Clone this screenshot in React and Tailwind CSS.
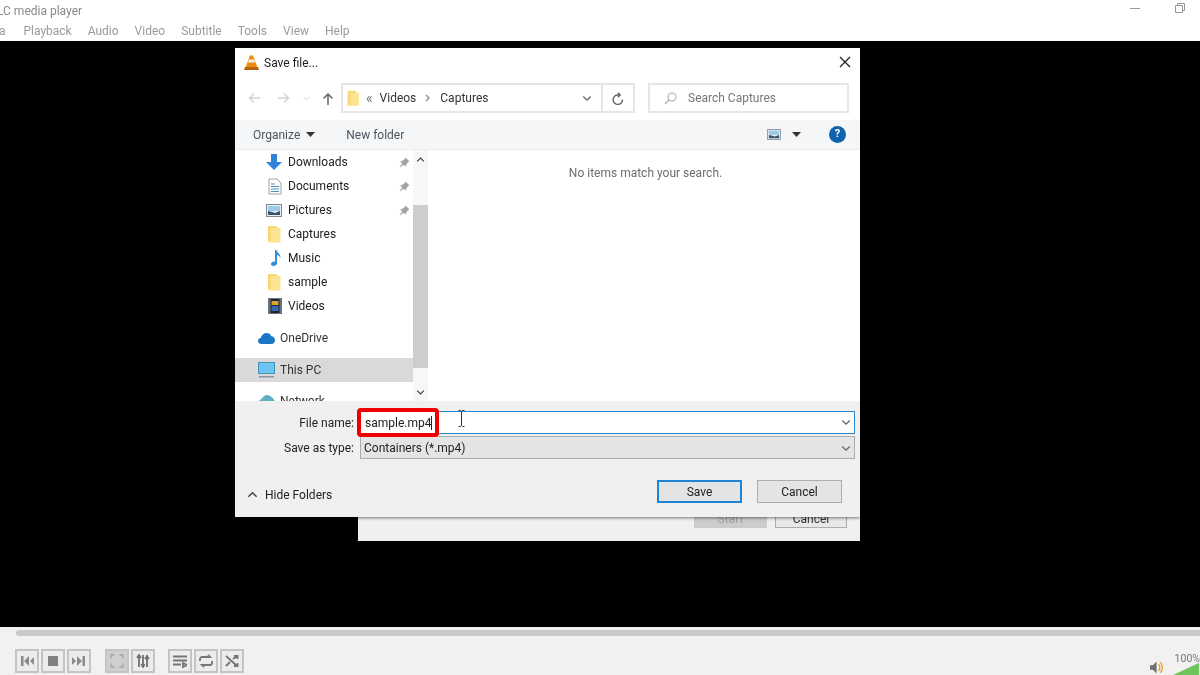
import React from "react";

const Folder = () => (
  <svg width="16" height="18" viewBox="0 0 16 18">
    <path d="M2 1h8l2 2v14H2z" fill="#f8d775" />
    <path d="M5 3h9.500v14.500H2V17L5 15z" fill="#fde58f" />
  </svg>
);

const Downloads = () => (
  <svg width="16" height="18" viewBox="0 0 16 18">
    <path d="M5 1h6v8h5l-8 8-8-8h5z" fill="#2f83d6" />
  </svg>
);

const Documents = () => (
  <svg width="14" height="17" viewBox="0 0 14 17">
    <path d="M1 1h8l4 4v11H1z" fill="#fdfdfd" stroke="#9aa3ab" />
    <path d="M3 6h4M3 8.500h8M3 11h8M3 13.500h8" stroke="#4a90b8" />
  </svg>
);

const Pictures = ({ w = 16, h = 13 }) => (
  <svg width={w} height={h} viewBox="0 0 16 13">
    <rect x="0.500" y="0.500" width="15" height="12" fill="#e8eef3" stroke="#7d8a94" />
    <rect x="2" y="2" width="12" height="5" fill="#9ccbe8" />
    <path d="M2 11V7l4 1 3 1 5-2v4z" fill="#39566b" />
  </svg>
);

const Music = () => (
  <svg width="12" height="18" viewBox="0 0 12 18">
    <path d="M5 1h1.500c.5 3 4.500 4 4 8-.8-2-2.500-3-3.500-3v8.500C7 16 5 17 3.300 17 1.800 17 1 16 1 15c0-1.500 2-2.800 4-2.400z" fill="#2f8fd8" />
  </svg>
);

const Videos = () => (
  <svg width="14" height="16" viewBox="0 0 14 16">
    <rect width="14" height="16" fill="#6c7279" />
    <rect x="2.500" y="1" width="9" height="14" fill="#1c2733" />
    <rect x="3.500" y="3" width="7" height="4" fill="#d8a531" />
    <rect x="3.500" y="8" width="7" height="5" fill="#3568b5" />
  </svg>
);

const OneDrive = () => (
  <svg width="17" height="11" viewBox="0 0 17 11">
    <path d="M3.500 11C1.500 11 0 9.700 0 8c0-1.600 1.200-2.800 2.800-2.900C3.500 2 5.800 0 8.500 0c2.200 0 4 1.200 4.800 3.200C15.400 3.300 17 5 17 7.200 17 9.400 15.400 11 13.300 11z" fill="#1b76c8" />
  </svg>
);

const Monitor = () => (
  <svg width="17" height="16" viewBox="0 0 17 16">
    <rect x="0.500" y="0.500" width="16" height="11" fill="#6cc4f2" stroke="#4a8fb8" />
    <rect x="1" y="14" width="15" height="1.500" fill="#8a97a3" />
  </svg>
);

const Network = () => (
  <svg width="17" height="16" viewBox="0 0 17 16">
    <path d="M0 8c3 0 5-6 9-6 3 0 6 3 8 6v8H0z" fill="#5fb0c4" />
  </svg>
);

const Pin = () => (
  <svg width="11" height="11" viewBox="0 0 11 11">
    <path d="M6.500 0.500l4 4-1.200.6-2.300 2.700-.4 2-2-2L1.200 10.200 0.800 9.800l2.400-3.400-2-2 2-.4L5.900 1.700z" fill="#a3a3a3" />
  </svg>
);

const Chevron = ({ up, color = "#555", width = 12 }) => (
  <svg width={width} height="7" viewBox="0 0 12 7" fill="none" stroke={color} strokeWidth="1.600">
    <path d={up ? "M1.500 6L6 1.500 10.500 6" : "M1.500 1L6 5.500 10.500 1"} />
  </svg>
);

const Caret = () => (
  <svg width="9" height="5" viewBox="0 0 9 5">
    <path d="M0 0h9L4.500 5z" fill="#333" />
  </svg>
);

const VlcCone = () => (
  <svg width="15" height="17" viewBox="0 0 15 16">
    <path d="M6 1h3l4.500 12h-12z" fill="#ef8a12" />
    <path d="M5 5h5l1 3H4z" fill="#f3efe6" />
    <path d="M1 12.500h13l1 3H0z" fill="#b8610f" />
  </svg>
);

const navItems = [
  { label: "Downloads", icon: <Downloads />, pin: true },
  { label: "Documents", icon: <Documents />, pin: true },
  { label: "Pictures", icon: <Pictures />, pin: true },
  { label: "Captures", icon: <Folder /> },
  { label: "Music", icon: <Music /> },
  { label: "sample", icon: <Folder /> },
  { label: "Videos", icon: <Videos /> },
];

const menus = ["Playback", "Audio", "Video", "Subtitle", "Tools", "View", "Help"];

const CtrlBtn = ({ children, dim }) => (
  <div className={`flex h-[24px] w-[24px] items-center justify-center border-2 border-[#c4c4c4] ${dim ? "bg-[#cfcfcf]" : "bg-[#ececec]"}`}>
    {children}
  </div>
);

const controlGroups = [
  [
    <path key="p" d="M1 2h2.500v10H1zM9 2v10L4 7zM15 2v10L10 7z" fill="#8a8a8a" />,
    <path key="s" d="M2 2h10v10H2z" fill="#808080" />,
    <path key="n" d="M-1 2v10l5-5zM5 2v10l5-5zM10.500 2H13v10h-2.500z" fill="#8a8a8a" />,
  ],
  [
    <path key="f" d="M1 4.500V1h3.500M9.500 1H13v3.500M13 9.500V13H9.500M4.500 13H1V9.500" fill="none" stroke="#aeaeae" strokeWidth="1.800" />,
    <path key="e" d="M3 1v12M1 4l2-3 2 3M7 1v12M5.500 10L7 13l1.500-3M11 1v12M9 5l2-3 2 3" fill="none" stroke="#707070" strokeWidth="1.800" />,
  ],
  [
    <path key="l" d="M0 2.500h14M0 6.500h14M0 10.500h8M10 9v4l4-2z" fill="none" stroke="#757575" strokeWidth="1.800" />,
    <path key="r" d="M1 7V5a2 2 0 0 1 2-2h8l-2-2M13 7v2a2 2 0 0 1-2 2H3l2 2" fill="none" stroke="#757575" strokeWidth="1.800" />,
    <path key="x" d="M1 2l11 10M1 12l4-4M8 5l4-3M9 2h3.500v3M9 12h3.500V9" fill="none" stroke="#757575" strokeWidth="1.800" />,
  ],
];

export default function App() {
  return (
    <div className="relative flex h-[675px] w-[1200px] flex-col overflow-hidden bg-black font-['Roboto',sans-serif] text-[12px] text-[#333] blur-[0.4px]">
      {/* vlc window top */}
      <div className="h-[41px] bg-white">
        <div className="flex h-[21px] items-center justify-between pr-[15px]">
          <span className="ml-[-3px] text-[#8a8a8a]">LC media player</span>
          <div className="flex items-center gap-[35px] pb-[5px]">
            <div className="h-[1px] w-[10px] bg-[#999]" />
            <svg width="10" height="10" viewBox="0 0 10 10" fill="none" stroke="#999">
              <path d="M0.500 2.500h7v7h-7zM2.500 2.500v-2h7v7h-2" />
            </svg>
          </div>
        </div>
        <div className="flex h-[20px] items-center gap-[16px] text-[#9a9a9a]">
          <span className="ml-[-4px] mr-[2px]">ia</span>
          {menus.map((m) => (
            <span key={m}>{m}</span>
          ))}
        </div>
      </div>

      <div className="flex-1" />

      {/* vlc controls */}
      <div className="flex h-[48px] flex-col bg-[#f1f1f1]">
        <div className="ml-[16px] mt-[3px] h-[7px] rounded-l-[4px] bg-[#c9c9c9]" />
        <div className="mt-[12px] flex flex-1 items-start pl-[15px] pt-[1px]">
          {controlGroups.map((group, i) => (
            <div key={i} className={`flex gap-[2px] ${i === 0 ? "mr-[14px]" : "mr-[13px]"}`}>
              {group.map((icon, j) => (
                <CtrlBtn key={j} dim={i === 1 && j === 0}>
                  <svg width="14" height="14" viewBox="0 0 14 14">{icon}</svg>
                </CtrlBtn>
              ))}
            </div>
          ))}
          <div className="ml-auto flex h-full items-end">
            <svg width="15" height="13" viewBox="0 0 16 13" className="mb-[1px] mr-[7px]">
              <path d="M0 4h3l4-4v13L3 9H0z" fill="#707070" />
              <path d="M9 3c2 2 2 5 0 7M11 1c3 3 3 8 0 11" fill="none" stroke="#e8a33a" strokeWidth="1.500" />
            </svg>
            <div className="relative h-[26px] w-[28px]">
              <span className="absolute right-0 top-[2px] text-[10.5px] text-[#777]">100%</span>
              <svg width="28" height="12" viewBox="0 0 28 13" className="absolute bottom-0 left-0">
                <path d="M0 13L28 0v13z" fill="#6fc45a" />
              </svg>
            </div>
          </div>
        </div>
      </div>

      {/* window behind the dialog */}
      <div className="absolute left-[358px] top-[500px] flex h-[41px] w-[502px] items-end justify-end gap-[8px] bg-[#f0f0f0] pb-[13px] pr-[13px]">
        <div className="flex h-[18px] w-[73px] items-center justify-center bg-[#cccccc] text-[#a0a0a0]">Start</div>
        <div className="flex h-[18px] w-[72px] items-center justify-center border border-[#adadad] bg-[#e8e8e8]">Cancel</div>
      </div>

      {/* save dialog */}
      <div className="absolute left-[235px] top-[48px] flex h-[469px] w-[625px] flex-col bg-white shadow-[0_1px_3px_rgba(0,0,0,0.5)]">
        <div className="flex h-[28px] items-center pl-[9px] pr-[9px]">
          <VlcCone />
          <span className="ml-[5px] pt-[1px] text-[#222]">Save file...</span>
          <svg width="12" height="12" viewBox="0 0 12 12" className="ml-auto" stroke="#222" strokeWidth="1.300">
            <path d="M1 1l10 10M11 1L1 11" />
          </svg>
        </div>

        <div className="flex h-[44px] items-start pt-[7px]">
          <div className="flex h-[30px] w-[106px] items-center pl-[13px]">
            <svg width="13" height="12" viewBox="0 0 13 12" fill="none" stroke="#d4d4d4" strokeWidth="1.500">
              <path d="M12 6H2M6 1.500L1.500 6 6 10.500" />
            </svg>
            <svg width="13" height="12" viewBox="0 0 13 12" fill="none" stroke="#d4d4d4" strokeWidth="1.500" className="ml-[16px]">
              <path d="M1 6h10M7 1.500L11.500 6 7 10.500" />
            </svg>
            <svg width="7" height="5" viewBox="0 0 7 5" fill="none" stroke="#d4d4d4" className="ml-[13px]">
              <path d="M0.500 1L3.500 4 6.500 1" />
            </svg>
            <svg width="12" height="13" viewBox="0 0 12 13" fill="none" stroke="#666" strokeWidth="1.500" className="ml-[12px]">
              <path d="M6 13V2M1.500 6.500L6 2l4.500 4.500" />
            </svg>
          </div>
          <div className="flex h-[30px] w-[294px] items-center border-2 border-[#e6e6e6]">
            <div className="ml-[2px] scale-90">
              <Folder />
            </div>
            <span className="ml-[5px] text-[14px] leading-none text-[#777]">«</span>
            <span className="ml-[7px]">Videos</span>
            <svg width="6" height="8" viewBox="0 0 6 8" fill="none" stroke="#888" strokeWidth="1.200" className="mx-[9px]">
              <path d="M1 1l3 3-3 3" />
            </svg>
            <span>Captures</span>
            <div className="ml-auto flex h-full items-center">
              <Chevron width={10} color="#666" />
              <div className="ml-[9px] flex h-full w-[32px] items-center justify-center border-l-2 border-[#e6e6e6]">
                <svg width="12" height="13" viewBox="0 0 12 13" fill="none" stroke="#666" strokeWidth="1.400">
                  <path d="M10.500 7.500A4.700 4.700 0 1 1 6 3h2M6 0.800L8.200 3 6 5.200" />
                </svg>
              </div>
            </div>
          </div>
          <div className="ml-[13px] flex h-[30px] w-[201px] items-center border-2 border-[#e6e6e6] pl-[14px] text-[#777]">
            <svg width="13" height="13" viewBox="0 0 13 13" fill="none" stroke="#aaa" strokeWidth="1.100">
              <circle cx="8" cy="5" r="4" />
              <path d="M5 8L1 12" />
            </svg>
            <span className="ml-[11px]">Search Captures</span>
          </div>
        </div>

        <div className="flex h-[30px] items-center border-b border-[#ececec] bg-[#f5f6f7] pl-[18px] pr-[14px] text-[#4a5560]">
          <span>Organize</span>
          <div className="ml-[6px]">
            <Caret />
          </div>
          <span className="ml-[31px]">New folder</span>
          <div className="ml-auto">
            <Pictures w={14} h={11} />
          </div>
          <div className="ml-[11px]">
            <Caret />
          </div>
          <div className="ml-[28px] flex h-[17px] w-[17px] items-center justify-center rounded-full bg-[#0f62ae] text-[11px] font-bold text-white">?</div>
        </div>

        <div className="flex h-[251px] overflow-hidden">
          <div className="flex w-[178px] flex-col overflow-hidden">
            {navItems.map((item) => (
              <div key={item.label} className="flex h-[24px] shrink-0 items-center">
                <div className="flex w-[53px] shrink-0 items-center justify-end pr-[6px]">{item.icon}</div>
                <span className="text-[#222]">{item.label}</span>
                {item.pin && (
                  <div className="ml-auto mr-[3px]">
                    <Pin />
                  </div>
                )}
              </div>
            ))}
            <div className="mt-[8px] flex h-[24px] shrink-0 items-center pl-[23px]">
              <OneDrive />
              <span className="ml-[5px]">OneDrive</span>
            </div>
            <div className="mt-[8px] flex h-[24px] shrink-0 items-center bg-[#d9d9d9] pl-[23px]">
              <Monitor />
              <span className="ml-[5px]">This PC</span>
            </div>
            <div className="mt-[7px] flex h-[24px] shrink-0 items-center pl-[23px]">
              <Network />
              <span className="ml-[5px]">Network</span>
            </div>
          </div>
          <div className="flex w-[15px] flex-col items-center bg-[#f7f7f7]">
            <div className="flex h-[19px] items-center">
              <Chevron up width={9} color="#444" />
            </div>
            <div className="mt-[36px] h-[163px] w-full bg-[#cdcdcd]" />
            <div className="mt-[21px]">
              <Chevron width={9} color="#444" />
            </div>
          </div>
          <div className="flex-1 pl-[3px] pt-[14px] text-center text-[#6d6d6d]">No items match your search.</div>
        </div>

        <div className="flex flex-1 flex-col bg-[#f0f0f0] pl-[5px] pr-[5px] pt-[10px]">
          <div className="flex h-[23px] items-center">
            <span className="w-[115px] pr-[1px] pt-[1px] text-right text-[#222]">File name:</span>
            <div className="relative ml-[5px] flex h-[23px] flex-1 items-center justify-end border border-[#2a88cf] bg-white pr-[3px]">
              <Chevron width={10} color="#666" />
              <div className="absolute left-[-4px] top-[-4px] flex h-[29px] w-[82px] items-center rounded-[4px] border-[4px] border-[#f00000] bg-white pl-[4px] text-[#222]">
                sample.mp4<span className="h-[14px] w-px bg-[#222]" />
              </div>
              {/* mouse cursor */}
              <svg width="7" height="17" viewBox="0 0 7 17" fill="none" stroke="#333" className="absolute left-[97px] top-[-2px]">
                <path d="M0.500 0.500h2l1 1 1-1h2M3.500 1.500v14M0.500 16.500h2l1-1 1 1h2" />
              </svg>
            </div>
          </div>
          <div className="mt-[2px] flex h-[23px] items-center">
            <span className="w-[115px] pr-[1px] pt-[1px] text-right text-[#222]">Save as type:</span>
            <div className="ml-[5px] flex h-[23px] flex-1 items-center justify-between border border-[#adadad] bg-[#e4e4e4] pl-[3px] pr-[3px] pt-[1px] text-[#222]">
              <span>Containers (*.mp4)</span>
              <Chevron width={10} color="#666" />
            </div>
          </div>
          <div className="mt-[21px] flex items-start">
            <div className="mt-[3px] flex h-[23px] items-center pl-[7px]">
              <Chevron up width={11} color="#444" />
              <span className="ml-[7px] text-[#222]">Hide Folders</span>
            </div>
            <div className="ml-auto flex h-[23px] w-[85px] items-center justify-center border-2 border-[#1e84d6] bg-[#e4e4e4] pt-[1px] text-[#222]">Save</div>
            <div className="ml-[15px] mr-[13px] flex h-[23px] w-[85px] items-center justify-center border border-[#adadad] bg-[#e4e4e4] pt-[1px] text-[#222]">Cancel</div>
          </div>
        </div>
      </div>
    </div>
  );
}
